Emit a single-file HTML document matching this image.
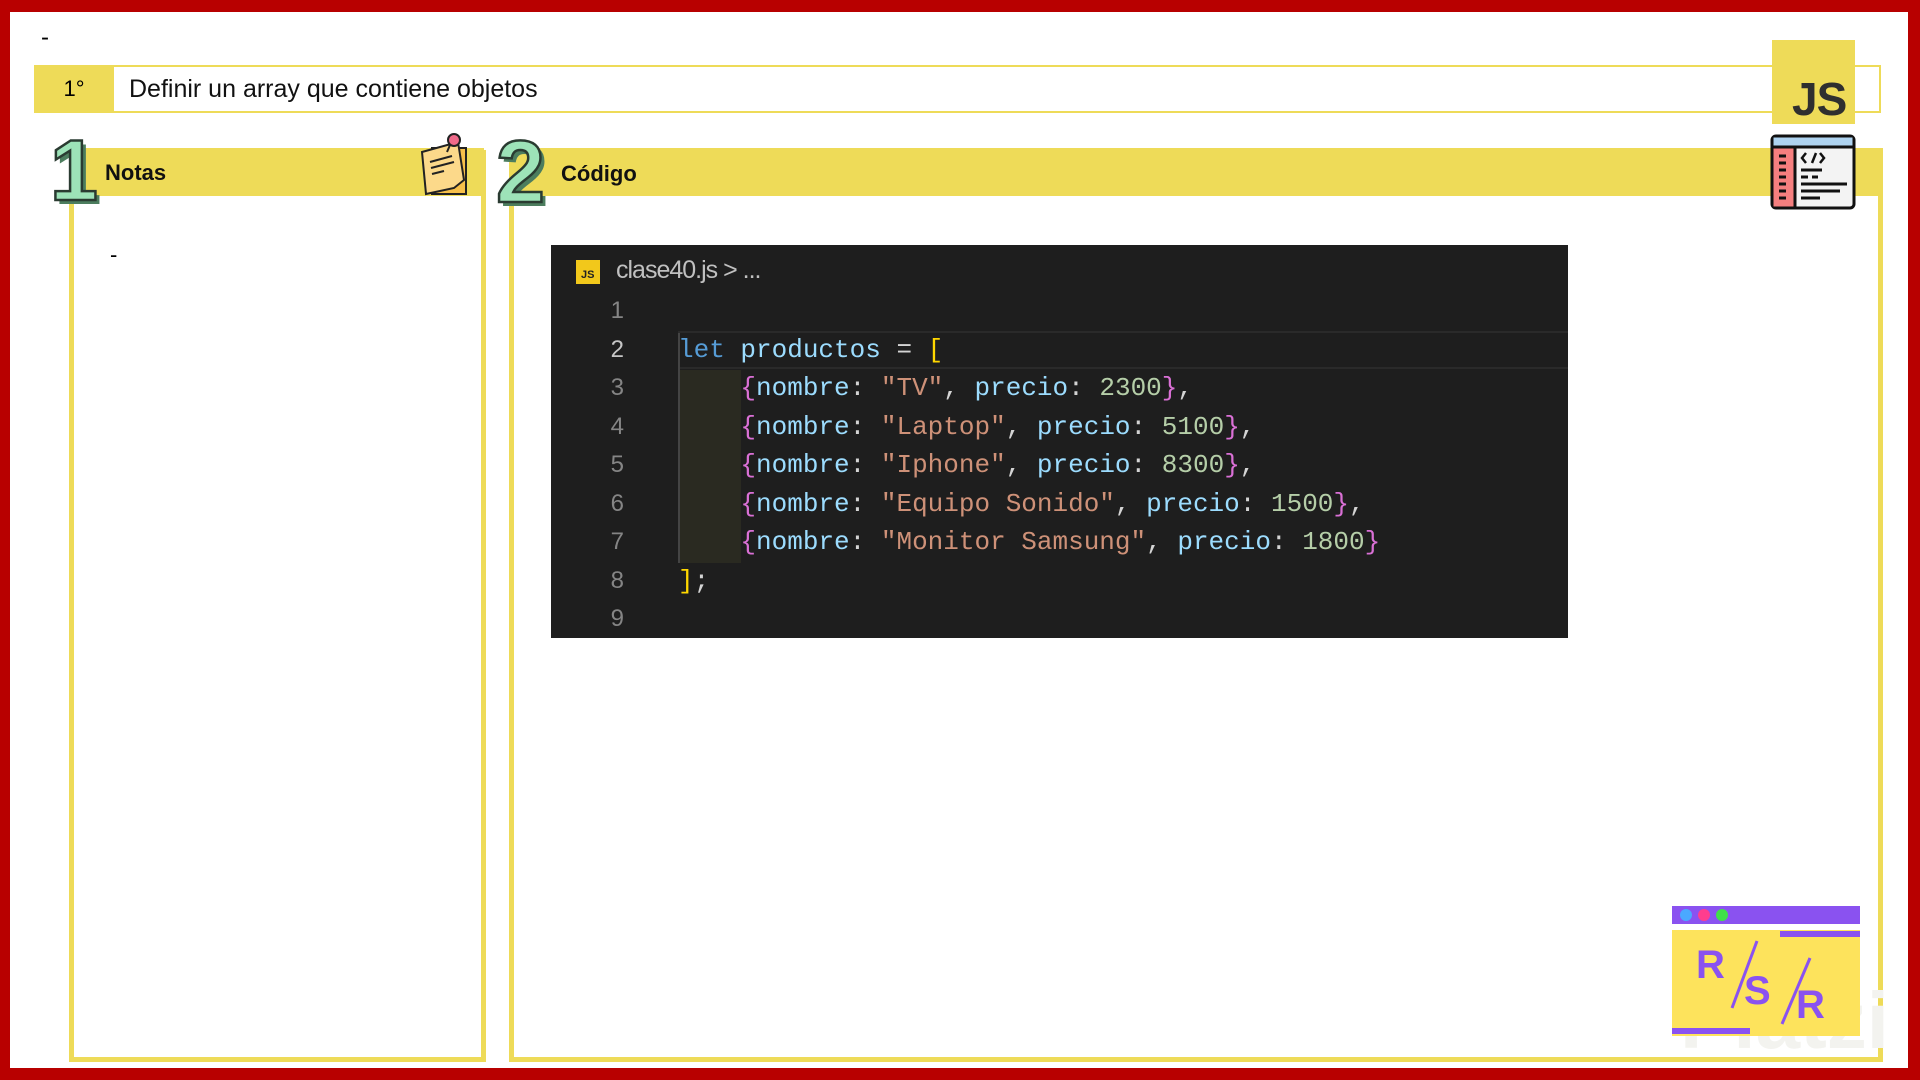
<!DOCTYPE html>
<html><head><meta charset="utf-8"><style>
*{margin:0;padding:0;box-sizing:border-box}
body{width:1920px;height:1080px;background:#b80000;position:relative;overflow:hidden;font-family:"Liberation Sans",sans-serif}
.page{position:absolute;left:10px;top:12px;width:1898px;height:1056px;background:#fff}
.abs{position:absolute}
.y{background:#eedb58}
.code{font-family:"Liberation Mono",monospace;font-size:26px;white-space:pre;color:#d4d4d4}
.ln{position:absolute;left:580px;width:44px;text-align:right;font-family:"Liberation Sans",sans-serif;font-size:24px;color:#858585}
.cl{position:absolute;left:678px}
.k{color:#569cd6}.v{color:#9cdcfe}.s{color:#ce9178}.n{color:#b5cea8}.p{color:#da70d6}.b{color:#ffd700}
</style></head><body>
<div class="page"></div>
<div class="abs" style="left:41px;top:24px;font-size:24px">-</div>

<!-- title bar -->
<div class="abs" style="left:34px;top:65px;width:1847px;height:48px;border:2px solid #eedb58"></div>
<div class="abs y" style="left:34px;top:65px;width:80px;height:48px;font-size:22px;line-height:48px;text-align:center">1°</div>
<div class="abs" style="left:129px;top:65px;line-height:48px;font-size:25px;color:#111">Definir un array que contiene objetos</div>

<!-- Notas panel -->
<div class="abs" style="left:69px;top:150px;width:417px;height:912px;border:5px solid #eedb58"></div>
<div class="abs y" style="left:72px;top:148px;width:412px;height:48px"></div>
<svg class="abs" style="left:50px;top:132px" width="58" height="80"><text x="4" y="72" font-family="Liberation Sans" font-weight="bold" font-size="86" fill="#4c7d5e">1</text><text x="0" y="68" font-family="Liberation Sans" font-weight="bold" font-size="86" fill="#9de3b8" stroke="#2a3b31" stroke-width="2.5">1</text></svg>
<div class="abs" style="left:105px;top:160px;font-size:22px;font-weight:bold;color:#111">Notas</div>
<svg class="abs" style="left:414px;top:130px" width="60" height="70" viewBox="0 0 60 70">
<rect x="18" y="18" width="34" height="46" fill="#f7c04a" stroke="#222" stroke-width="2"/>
<path d="M8 22l36-10 6 38-10 8-28 6z" fill="#fcd98a" stroke="#222" stroke-width="2"/>
<g stroke="#222" stroke-width="2"><line x1="16" y1="32" x2="38" y2="26"/><line x1="17" y1="38" x2="40" y2="32"/><line x1="18" y1="44" x2="30" y2="41"/></g>
<circle cx="40" cy="10" r="6" fill="#f06a8a" stroke="#222" stroke-width="2"/><line x1="36" y1="15" x2="33" y2="22" stroke="#222" stroke-width="2"/>
</svg>
<div class="abs" style="left:110px;top:242px;font-size:22px">-</div>

<!-- Código panel -->
<div class="abs" style="left:509px;top:150px;width:1374px;height:912px;border:5px solid #eedb58"></div>
<div class="abs y" style="left:512px;top:148px;width:1371px;height:48px"></div>
<svg class="abs" style="left:496px;top:130px" width="60" height="80"><text x="4" y="76" font-family="Liberation Sans" font-weight="bold" font-size="88" fill="#4c7d5e">2</text><text x="0" y="72" font-family="Liberation Sans" font-weight="bold" font-size="88" fill="#9de3b8" stroke="#2a3b31" stroke-width="2.5">2</text></svg>
<div class="abs" style="left:561px;top:161px;font-size:22px;font-weight:bold;color:#111">Código</div>

<!-- JS logo -->
<div class="abs y" style="left:1772px;top:40px;width:83px;height:84px"></div>
<div class="abs" style="left:1792px;top:72px;font-size:46px;font-weight:bold;color:#2f2f2f;letter-spacing:-1px">JS</div>
<!-- code icon -->
<svg class="abs" style="left:1770px;top:134px" width="86" height="76" viewBox="0 0 86 76">
<rect x="2" y="2" width="82" height="72" rx="4" fill="#f3f3f3" stroke="#111" stroke-width="3"/>
<rect x="3.5" y="3.5" width="79" height="9" fill="#aed3f0"/>
<line x1="2" y1="13" x2="84" y2="13" stroke="#111" stroke-width="3"/>
<rect x="3.5" y="14.5" width="21" height="58" fill="#f57f7f"/>
<line x1="25" y1="13" x2="25" y2="74" stroke="#111" stroke-width="3"/>
<g stroke="#111" stroke-width="3"><line x1="9" y1="22" x2="16" y2="22"/><line x1="9" y1="29" x2="16" y2="29"/><line x1="9" y1="36" x2="16" y2="36"/><line x1="9" y1="43" x2="16" y2="43"/><line x1="9" y1="50" x2="16" y2="50"/><line x1="9" y1="57" x2="16" y2="57"/><line x1="9" y1="64" x2="16" y2="64"/>
<line x1="31" y1="36" x2="52" y2="36"/><line x1="31" y1="43" x2="38" y2="43"/><line x1="42" y1="43" x2="48" y2="43"/><line x1="31" y1="50" x2="77" y2="50"/><line x1="31" y1="57" x2="70" y2="57"/><line x1="31" y1="64" x2="50" y2="64"/></g>
<path d="M36 19l-4 5 4 5M42 29l4-10M50 19l4 5-4 5" fill="none" stroke="#111" stroke-width="2.5"/>
</svg>

<!-- code block -->
<div class="abs" style="left:551px;top:245px;width:1017px;height:393px;background:#1e1e1e"></div>
<div class="abs" style="left:576px;top:260px;width:24px;height:24px;background:#f2c81b;font-size:11px;font-weight:bold;color:#222;padding:9px 0 0 5px;line-height:12px">JS</div>
<div class="abs" style="left:616px;top:256px;font-size:25px;color:#c0c0c0;letter-spacing:-1px">clase40.js &gt; ...</div>
<div class="abs" style="left:678px;top:331px;width:890px;height:38px;border-top:2px solid #2a2a2a;border-bottom:2px solid #2a2a2a"></div>
<div class="abs" style="left:678px;top:370px;width:63px;height:193px;background:#2a2a21"></div>
<div class="abs" style="left:678px;top:333px;width:2px;height:230px;background:#444"></div>

<div class="ln" style="top:297px">1</div>
<div class="ln" style="top:336px;color:#c6c6c6">2</div>
<div class="ln" style="top:374px">3</div>
<div class="ln" style="top:413px">4</div>
<div class="ln" style="top:451px">5</div>
<div class="ln" style="top:490px">6</div>
<div class="ln" style="top:528px">7</div>
<div class="ln" style="top:567px">8</div>
<div class="ln" style="top:605px">9</div>

<div class="code cl" style="top:335px"><span class="k">let</span> <span class="v">productos</span> = <span class="b">[</span></div>
<div class="code cl" style="top:373px">    <span class="p">{</span><span class="v">nombre</span>: <span class="s">"TV"</span>, <span class="v">precio</span>: <span class="n">2300</span><span class="p">}</span>,</div>
<div class="code cl" style="top:412px">    <span class="p">{</span><span class="v">nombre</span>: <span class="s">"Laptop"</span>, <span class="v">precio</span>: <span class="n">5100</span><span class="p">}</span>,</div>
<div class="code cl" style="top:450px">    <span class="p">{</span><span class="v">nombre</span>: <span class="s">"Iphone"</span>, <span class="v">precio</span>: <span class="n">8300</span><span class="p">}</span>,</div>
<div class="code cl" style="top:489px">    <span class="p">{</span><span class="v">nombre</span>: <span class="s">"Equipo Sonido"</span>, <span class="v">precio</span>: <span class="n">1500</span><span class="p">}</span>,</div>
<div class="code cl" style="top:527px">    <span class="p">{</span><span class="v">nombre</span>: <span class="s">"Monitor Samsung"</span>, <span class="v">precio</span>: <span class="n">1800</span><span class="p">}</span></div>
<div class="code cl" style="top:566px"><span class="b">]</span>;</div>

<!-- Platzi watermark -->
<div class="abs" style="left:1680px;top:975px;font-size:80px;font-weight:bold;color:#f3f3ef">Platzi</div>

<!-- RSR logo -->
<svg class="abs" style="left:1672px;top:906px" width="188" height="130" viewBox="0 0 188 130">
<rect x="0" y="0" width="188" height="18" fill="#8a52f0"/>
<circle cx="14" cy="9" r="6" fill="#4aa8ff"/><circle cx="32" cy="9" r="6" fill="#ff3d8e"/><circle cx="50" cy="9" r="6" fill="#3fe04a"/>
<rect x="0" y="24" width="188" height="106" fill="#fde35c"/>
<rect x="108" y="25" width="80" height="6" fill="#8a52f0"/>
<rect x="0" y="122" width="78" height="6" fill="#8a52f0"/>
<text x="24" y="72" font-family="Liberation Sans" font-weight="bold" font-size="40" fill="#8a52f0">R</text>
<text x="72" y="98" font-family="Liberation Sans" font-weight="bold" font-size="40" fill="#8a52f0">S</text>
<text x="124" y="112" font-family="Liberation Sans" font-weight="bold" font-size="40" fill="#8a52f0">R</text>
<line x1="85" y1="35" x2="60" y2="102" stroke="#8a52f0" stroke-width="3"/>
<line x1="138" y1="52" x2="110" y2="118" stroke="#8a52f0" stroke-width="3"/>
</svg>
</body></html>
